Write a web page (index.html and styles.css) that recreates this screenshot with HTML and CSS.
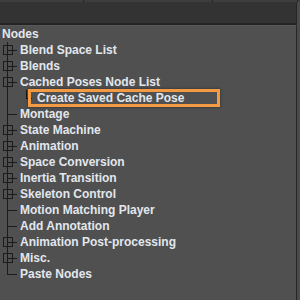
FILE: index.html
```html
<!DOCTYPE html>
<html lang="en">
<head>
  <meta charset="UTF-8" />
  <title>Nodes</title>
  <link rel="stylesheet" href="styles.css">
</head>
<body>

  <div class="strip">
    <span class="tick t1"></span>
    <span class="tick t2"></span>
    <span class="tick t3"></span>
  </div>
  <div class="topbar"></div>

  <section class="panel">
    <div class="row root">Nodes</div>
    <ul class="tree">
      <li class="row"><span class="tw plus"></span>Blend Space List</li>
      <li class="row"><span class="tw plus"></span>Blends</li>
      <li class="row"><span class="tw plus"></span>Cached Poses Node List</li>
      <li class="row"><span class="tw trunk"></span><span class="tw2"></span><span class="pick">Create Saved Cache Pose</span></li>
      <li class="row"><span class="tw"></span>Montage</li>
      <li class="row"><span class="tw plus"></span>State Machine</li>
      <li class="row"><span class="tw plus"></span>Animation</li>
      <li class="row"><span class="tw plus"></span>Space Conversion</li>
      <li class="row"><span class="tw plus"></span>Inertia Transition</li>
      <li class="row"><span class="tw plus"></span>Skeleton Control</li>
      <li class="row"><span class="tw"></span>Motion Matching Player</li>
      <li class="row"><span class="tw"></span>Add Annotation</li>
      <li class="row"><span class="tw plus"></span>Animation Post-processing</li>
      <li class="row"><span class="tw plus"></span>Misc.</li>
      <li class="row last"><span class="tw"></span>Paste Nodes</li>
    </ul>
  </section>

</body>
</html>
```

FILE: styles.css
```css
body {
  margin: 0;
  background-color: #4a4a4a;
  font-family: "Liberation Sans", Arial, sans-serif;
  font-size: 12px;
  font-weight: bold;
  color: #e2e7ee;
  overflow: hidden;
}

.strip {
  height: 2px;
  background-color: #3e3e3e;
  display: flex;
}

.tick {
  width: 1px;
  height: 2px;
  background-color: #262626;
}

.t1 { margin-left: 83px; }
.t2 { margin-left: 128px; }
.t3 { margin-left: 84px; }

.topbar {
  height: 21px;
  width: 296px;
  background-color: #333333;
  border-right: 1px solid #262626;
  border-bottom: 2px solid #232323;
}

.panel {
  width: 296px;
  height: 280px;
  background-color: #505050;
  border-right: 1px solid #262626;
  border-top: 1px solid #585858;
}

.tree {
  list-style: none;
  margin: 0;
  padding: 0;
}

.row {
  height: 16px;
  line-height: 16px;
  display: flex;
  align-items: center;
  white-space: nowrap;
}

.root {
  padding-left: 2px;
}

/* tree connectors */
.tw {
  position: relative;
  width: 20px;
  height: 16px;
  flex: none;
}

.tw::before {
  content: "";
  position: absolute;
  left: 7px;
  top: 0;
  bottom: 0;
  border-left: 1px solid #1c1c1c;
}

.tw::after {
  content: "";
  position: absolute;
  left: 7px;
  top: 8px;
  width: 10px;
  border-top: 1px solid #1c1c1c;
}

.tw.trunk::after {
  display: none;
}

.last .tw::before {
  bottom: 8px;
}

.tw.plus {
  background: linear-gradient(#1c1c1c, #1c1c1c) 3px 3px / 10px 1px no-repeat,
              linear-gradient(#1c1c1c, #1c1c1c) 3px 12px / 10px 1px no-repeat,
              linear-gradient(#1c1c1c, #1c1c1c) 3px 3px / 1px 10px no-repeat,
              linear-gradient(#1c1c1c, #1c1c1c) 12px 3px / 1px 10px no-repeat;
}

.tw2 {
  position: relative;
  width: 17px;
  height: 16px;
  flex: none;
}

.tw2::before {
  content: "";
  position: absolute;
  left: 6px;
  top: 0;
  height: 8px;
  width: 5px;
  border-left: 1px solid #1c1c1c;
  border-bottom: 1px solid #1c1c1c;
}

.pick {
  position: relative;
  margin-left: -9px;
  padding: 0 33px 0 6px;
  height: 12px;
  line-height: 12px;
  border: 3px solid #f39a43;
  box-shadow: 0 0 3px rgba(0, 0, 0, 0.45);
}
```
